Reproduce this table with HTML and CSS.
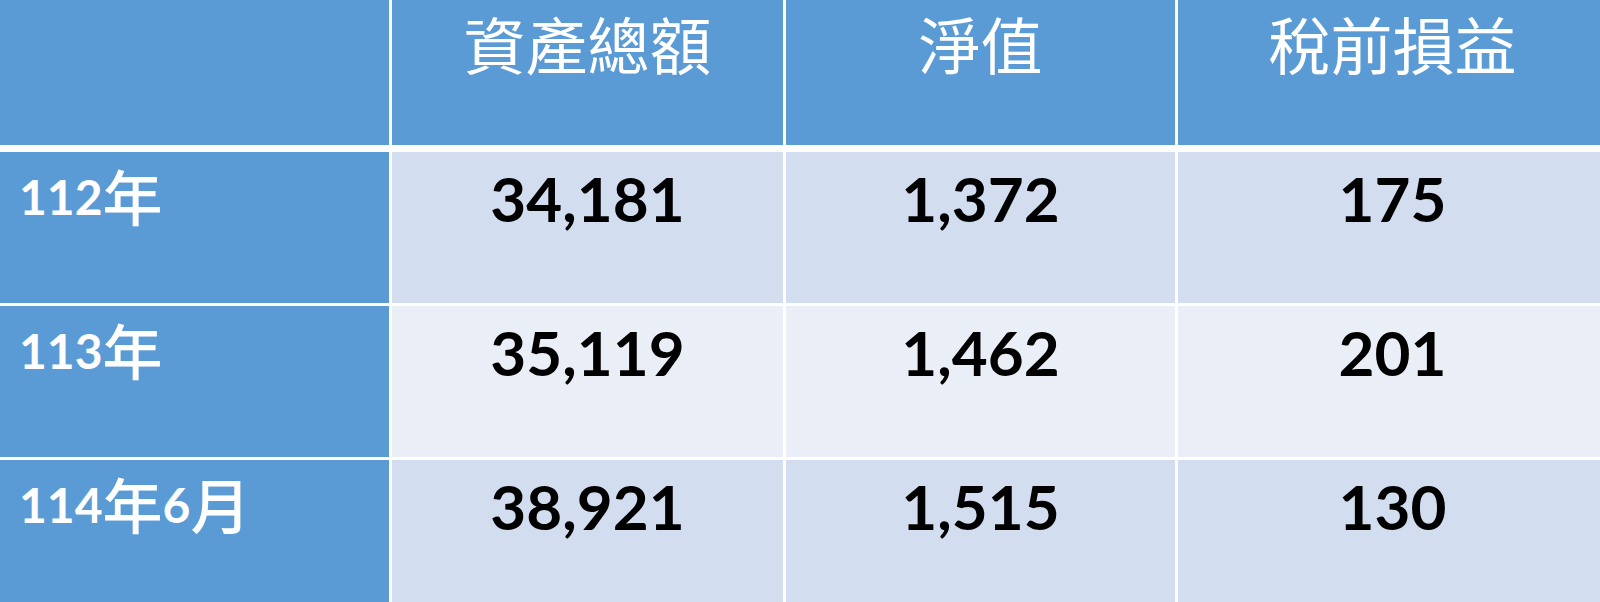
FILE: index.html
```html
<!DOCTYPE html>
<html lang="zh-Hant">
<head>
<meta charset="utf-8">
<title>財務摘要</title>
<link rel="stylesheet" href="styles.css">
</head>
<body>
<div class="table">
  <div class="row head">
    <div class="cell corner"></div>
    <div class="cell th">資產總額</div>
    <div class="cell th">淨值</div>
    <div class="cell th">稅前損益</div>
  </div>
  <div class="row odd">
    <div class="cell label">112<span class="cjk">年</span></div>
    <div class="cell num">34,181</div>
    <div class="cell num">1,372</div>
    <div class="cell num">175</div>
  </div>
  <div class="row even">
    <div class="cell label">113<span class="cjk">年</span></div>
    <div class="cell num">35,119</div>
    <div class="cell num">1,462</div>
    <div class="cell num">201</div>
  </div>
  <div class="row odd">
    <div class="cell label">114<span class="cjk">年</span>6<span class="cjk">月</span></div>
    <div class="cell num">38,921</div>
    <div class="cell num">1,515</div>
    <div class="cell num">130</div>
  </div>
</div>
</body>
</html>
```
FILE: styles.css
```css
html, body {
  margin: 0;
  padding: 0;
  background: #ffffff;
  overflow: hidden;
}

.table {
  width: 1607px;
  display: flex;
  flex-direction: column;
  gap: 3px;
}

.row {
  display: grid;
  grid-template-columns: 389px 391px 389px 429px;
  column-gap: 3px;
  height: 151px;
}

.row.head {
  height: 145px;
  margin-bottom: 4px;
}

.cell {
  box-sizing: border-box;
  background: #d2deef;
}

.row.even .cell {
  background: #eaeff7;
}

.row .cell.label,
.row .cell.corner,
.row.head .cell {
  background: #5b9bd5;
}

.th {
  color: #ffffff;
  font-family: "Noto Sans CJK TC", "Noto Sans CJK SC", sans-serif;
  font-weight: 400;
  font-size: 62px;
  line-height: 1.4;
  text-align: center;
  padding-top: 0;
}

.num {
  color: #000000;
  font-family: Lato, "Noto Sans", sans-serif;
  font-weight: 700;
  font-size: 62px;
  line-height: 1.2;
  text-align: center;
  padding-top: 9px;
}

.label {
  color: #ffffff;
  font-family: Lato, "Noto Sans CJK TC", sans-serif;
  font-weight: 700;
  font-size: 48px;
  line-height: 1.2;
  padding-top: 16px;
  padding-left: 19px;
}

.cjk {
  font-family: "Noto Sans CJK TC", sans-serif;
  font-weight: 500;
  font-size: 60px;
  line-height: 0;
  vertical-align: -6px;
}
```
